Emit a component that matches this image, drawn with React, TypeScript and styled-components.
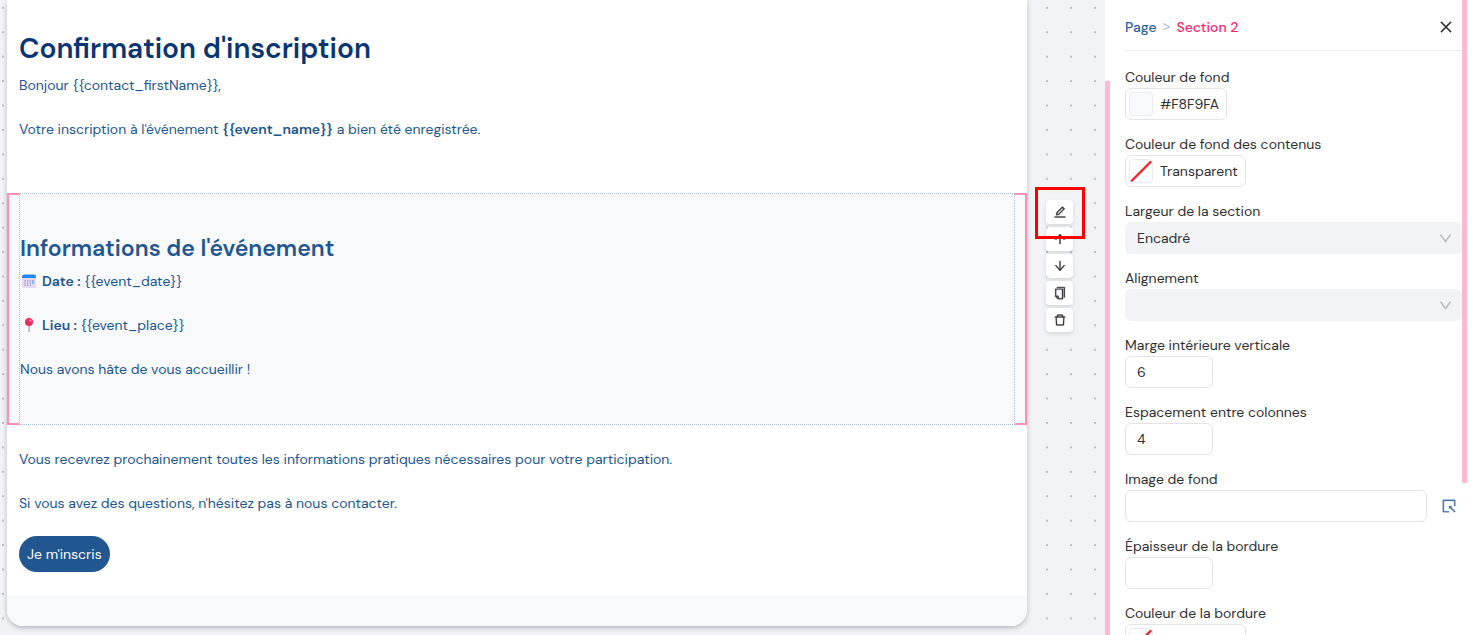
import React from 'react';
import styled, { createGlobalStyle, css } from 'styled-components';
import {
  AiOutlineArrowDown,
  AiOutlineArrowUp,
  AiOutlineClose,
  AiOutlineCopy,
  AiOutlineDelete,
  AiOutlineDown,
  AiOutlineEdit,
  AiOutlineSelect,
} from 'react-icons/ai';

const navy = '#0a3573';
const blue = '#215691';
const pink = '#ff8fb3';
const softPink = '#ffb8d2';
const ink = '#2f2f33';
const line = '#e3e4e6';

const GlobalStyle = createGlobalStyle`
  * { box-sizing: border-box; }
  body {
    margin: 0;
    background: #fff;
    font-family: 'DM Sans', 'Open Sans', 'Noto Sans', sans-serif;
    font-size: 14px;
    line-height: 22px;
    color: ${ink};
  }
  b { font-weight: 600; }
  button, input, select { font: inherit; color: inherit; }
`;

const Shell = styled.div`
  display: flex;
  height: 100vh;
  overflow: hidden;
  padding-right: 15px;
`;

const dots = css`
  background-color: #f2f3f5;
  background-image: radial-gradient(circle at 3px 8px, #bdbfc4 1px, transparent 1px);
  background-size: 24px 24px;
  background-repeat: repeat round;
`;

const Canvas = styled.main`
  ${dots}
  flex: 1;
  min-width: 0;
  display: flex;
  align-items: flex-start;
  padding-left: 7px;
`;

const Sheet = styled.article`
  position: relative;
  flex: 1;
  min-width: 0;
  background: #fff;
  border-radius: 0 0 16px 16px;
  box-shadow: 0 2px 5px rgba(40, 50, 70, 0.3);
  color: ${blue};
`;

const Block = styled.section<{ $top: number; $bottom: number }>`
  padding: ${p => p.$top}px 12px ${p => p.$bottom}px;
`;

const Title = styled.h1`
  margin: 0 0 3px;
  font-size: 28px;
  font-weight: 600;
  line-height: 44px;
  color: ${navy};
`;

const Subtitle = styled.h2`
  margin: 0;
  font-size: 23px;
  font-weight: 600;
  line-height: 44px;
`;

const Text = styled.p`
  margin: 0 0 22px;
`;

const Selected = styled.section`
  display: flex;
  background: #f8f9fb;
`;

const Bracket = styled.div<{ $side: 'left' | 'right' }>`
  flex: none;
  width: 12px;
  border: 2px solid ${pink};
  ${p => (p.$side === 'left' ? css`border-right: 0;` : css`border-left: 0;`)}
`;

const Column = styled.div`
  flex: 1;
  min-width: 0;
  padding: 32px 0 22px;
  border: 1px dotted #a9bfd4;
`;

const Emoji = styled.svg`
  width: 18px;
  height: 16px;
  margin-right: 4px;
  vertical-align: -3px;
`;

const Cta = styled.button`
  display: block;
  height: 36px;
  padding: 0 8px;
  border: 0;
  border-radius: 18px;
  background: ${blue};
  color: #fff;
`;

const Footer = styled.footer`
  height: 31px;
  border-radius: 0 0 16px 16px;
  background: #f8f9fb;
`;

const Tools = styled.aside`
  ${dots}
  flex: none;
  align-self: stretch;
  width: 78px;
  padding: 187px 0 0 8px;
  background-position: 17px 0;
`;

const ToolList = styled.div`
  position: relative;
  display: flex;
  flex-direction: column;
  align-items: flex-start;
  gap: 3px;
  padding: 13px 0 0 11px;
`;

const Tool = styled.button`
  display: flex;
  align-items: center;
  justify-content: center;
  width: 27px;
  height: 24px;
  padding: 0;
  border: 0;
  border-radius: 4px;
  background: #fff;
  box-shadow: 0 2px 4px rgba(0, 0, 0, 0.12);
  font-size: 14px;
  svg { stroke-width: 22px; }
`;

const Highlight = styled.div`
  position: absolute;
  top: 0;
  left: 0;
  width: 50px;
  height: 52px;
  border: 3px solid #f00;
`;

const Track = styled.div<{ $top?: number }>`
  flex: none;
  width: 5px;
  padding-top: ${p => p.$top ?? 0}px;
`;

const Thumb = styled.div<{ $share: number }>`
  height: ${p => p.$share}%;
  background: ${softPink};
`;

const Panel = styled.form`
  flex: none;
  width: 352px;
  padding: 4px 0 0 15px;
  overflow: hidden;
`;

const PanelHead = styled.header`
  display: flex;
  align-items: center;
  justify-content: space-between;
  height: 47px;
  margin-bottom: 15px;
  padding-right: 8px;
  border-bottom: 1px solid #eeeff0;
`;

const Crumbs = styled.nav`
  display: flex;
  gap: 6px;
  font-weight: 500;
  color: #a9b4d6;
`;

const Separator = styled.span`
  font-family: 'Open Sans', sans-serif;
  font-weight: 400;
`;

const Crumb = styled.a<{ $current?: boolean }>`
  color: ${p => (p.$current ? '#ff2473' : '#2f639b')};
  text-decoration: none;
`;

const IconButton = styled.button`
  display: flex;
  padding: 0;
  border: 0;
  background: none;
  font-size: 16px;
  svg { stroke-width: 20px; }
`;

const Field = styled.div`
  height: 67px;
`;

const Label = styled.label`
  display: block;
`;

const box = css`
  height: 32px;
  border: 1px solid ${line};
  border-radius: 6px;
  background: #fff;
`;

const ColorButton = styled.button`
  ${box}
  display: flex;
  align-items: center;
  gap: 7px;
  padding: 0 7px 0 3px;
`;

const Swatch = styled.svg<{ $fill: string }>`
  width: 24px;
  height: 24px;
  border: 1px solid #ebecee;
  border-radius: 4px;
  background: ${p => p.$fill};
`;

const Input = styled.input<{ $wide?: boolean }>`
  ${box}
  display: block;
  width: ${p => (p.$wide ? '302px' : '88px')};
  padding: 0 11px;
`;

const InputRow = styled.div`
  display: flex;
  align-items: center;
  gap: 14px;
`;

const SelectBox = styled.div`
  display: grid;
  align-items: center;
  color: #b4b5b9;
  > * { grid-area: 1 / 1; }
  > svg { justify-self: end; margin-right: 9px; pointer-events: none; stroke-width: 16px; }
`;

const Select = styled.select`
  appearance: none;
  width: 100%;
  height: 32px;
  padding: 0 12px;
  border: 0;
  border-radius: 6px;
  background: #f2f3f5;
  color: ${ink};
`;

const tools = [
  { name: 'Modifier', Icon: AiOutlineEdit },
  { name: 'Monter', Icon: AiOutlineArrowUp },
  { name: 'Descendre', Icon: AiOutlineArrowDown },
  { name: 'Dupliquer', Icon: AiOutlineCopy },
  { name: 'Supprimer', Icon: AiOutlineDelete },
];

function CalendarEmoji() {
  return (
    <Emoji viewBox="0 0 18 16" aria-hidden="true">
      <rect x="2" y="2" width="14" height="13" rx="2" fill="#e3d9f0" />
      <path d="M2 5V4a2.500 2.500 0 0 1 2.500-2.500h9A2.500 2.500 0 0 1 16 4v1z" fill="#1b87f5" />
      <path d="M5 7v6M7.700 7v6M10.300 7v6" stroke="#a99abf" strokeWidth="1.200" strokeDasharray="1.600 .6" />
      <path d="M13 7v4" stroke="#4c9cf0" strokeWidth="1.200" />
    </Emoji>
  );
}

function PinEmoji() {
  return (
    <Emoji viewBox="0 0 18 16" aria-hidden="true">
      <path d="M9 8v6.500" stroke="#a6a3b3" strokeWidth="1.300" strokeLinecap="round" />
      <circle cx="9" cy="5" r="4" fill="#ee2b60" />
      <circle cx="10.300" cy="3.600" r="1.200" fill="#ff86a8" />
    </Emoji>
  );
}

function ColorField({ id, label, value, transparent }: { id: string; label: string; value: string; transparent?: boolean }) {
  return (
    <Field>
      <Label htmlFor={id}>{label}</Label>
      <ColorButton type="button" id={id}>
        <Swatch $fill={transparent ? '#fff' : '#f8f9fa'} viewBox="0 0 22 22" aria-hidden="true">
          {transparent && <path d="M1.500 21 20.500 2" stroke="#f5222d" strokeWidth="2.400" strokeLinecap="round" />}
        </Swatch>
        {value}
      </ColorButton>
    </Field>
  );
}

function SelectField({ id, label, options }: { id: string; label: string; options: string[] }) {
  return (
    <Field>
      <Label htmlFor={id}>{label}</Label>
      <SelectBox>
        <Select id={id}>{options.map(o => <option key={o}>{o}</option>)}</Select>
        <AiOutlineDown size={15} />
      </SelectBox>
    </Field>
  );
}

function InputField({ id, label, value }: { id: string; label: string; value?: string }) {
  return (
    <Field>
      <Label htmlFor={id}>{label}</Label>
      <Input id={id} defaultValue={value} />
    </Field>
  );
}

export default function App() {
  return (
    <Shell>
      <GlobalStyle />
      <Canvas>
        <Sheet>
          <Block $top={27} $bottom={31}>
            <Title>Confirmation d'inscription</Title>
            <Text>Bonjour {'{{contact_firstName}}'},</Text>
            <Text>
              Votre inscription à l'événement <b>{'{{event_name}}'}</b> a bien été enregistrée.
            </Text>
          </Block>
          <Selected>
            <Bracket $side="left" />
            <Column>
              <Subtitle>Informations de l'événement</Subtitle>
              <Text><CalendarEmoji /><b>Date :</b> {'{{event_date}}'}</Text>
              <Text><PinEmoji /><b>Lieu :</b> {'{{event_place}}'}</Text>
              <Text>Nous avons hâte de vous accueillir !</Text>
            </Column>
            <Bracket $side="right" />
          </Selected>
          <Block $top={23} $bottom={23}>
            <Text>
              Vous recevrez prochainement toutes les informations pratiques nécessaires pour votre participation.
            </Text>
            <Text>Si vous avez des questions, n'hésitez pas à nous contacter.</Text>
            <Cta type="button">Je m'inscris</Cta>
          </Block>
          <Footer />
        </Sheet>
        <Tools>
          <ToolList>
            {tools.map(({ name, Icon }) => (
              <Tool key={name} type="button" aria-label={name}><Icon /></Tool>
            ))}
            <Highlight />
          </ToolList>
        </Tools>
      </Canvas>
      <Track $top={81}><Thumb $share={100} /></Track>
      <Panel>
        <PanelHead>
          <Crumbs aria-label="Fil d'Ariane">
            <Crumb href="#page">Page</Crumb>
            <Separator>&gt;</Separator>
            <Crumb href="#section" $current>Section 2</Crumb>
          </Crumbs>
          <IconButton type="button" aria-label="Fermer"><AiOutlineClose /></IconButton>
        </PanelHead>
        <ColorField id="background" label="Couleur de fond" value="#F8F9FA" />
        <ColorField id="content-background" label="Couleur de fond des contenus" value="Transparent" transparent />
        <SelectField id="width" label="Largeur de la section" options={['Encadré']} />
        <SelectField id="align" label="Alignement" options={['']} />
        <InputField id="margin" label="Marge intérieure verticale" value="6" />
        <InputField id="gap" label="Espacement entre colonnes" value="4" />
        <Field>
          <Label htmlFor="image">Image de fond</Label>
          <InputRow>
            <Input id="image" $wide />
            <IconButton type="button" aria-label="Choisir une image"><AiOutlineSelect color="#3f72a8" /></IconButton>
          </InputRow>
        </Field>
        <InputField id="border-width" label="Épaisseur de la bordure" />
        <ColorField id="border-color" label="Couleur de la bordure" value="Transparent" transparent />
      </Panel>
      <Track><Thumb $share={76} /></Track>
    </Shell>
  );
}
